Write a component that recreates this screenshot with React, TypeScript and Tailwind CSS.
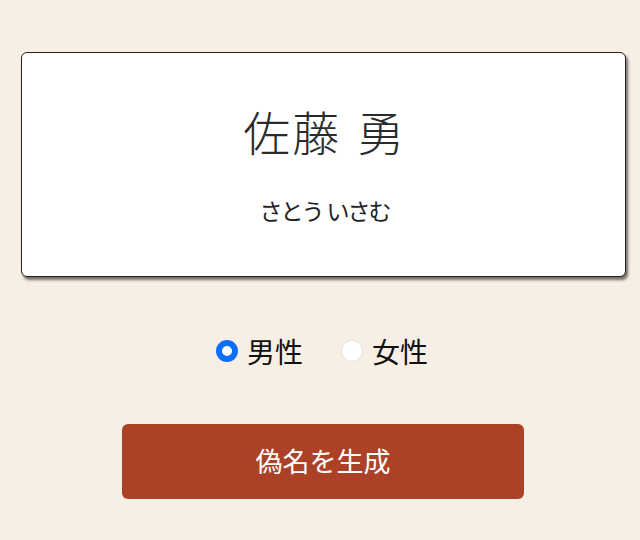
import { useState } from 'react'

const genders = [
  { id: 'male', label: '男性' },
  { id: 'female', label: '女性' },
]

export default function App() {
  const [gender, setGender] = useState('male')

  return (
    <div
      className="min-h-screen w-full bg-[#f8efe4] pt-[52px] text-[#212529]"
      style={{ fontFamily: '"Noto Sans CJK JP", "Noto Sans", sans-serif' }}
    >
      {/* 名前カード */}
      <div className="ml-[21px] w-[605px] h-[225px] bg-white border border-[#222] rounded-[6px] shadow-[2px_3px_3px_rgba(0,0,0,0.55)] flex flex-col items-center">
        <h1 className="mt-[48px] text-[47px] leading-[60px] font-light text-[#2b2b2b] tracking-[2px] [word-spacing:3px] pl-[2px]">佐藤 勇</h1>
        <p className="mt-[33px] text-[23px] leading-[32px] text-[#222] tracking-[-2px] [word-spacing:1px] pl-[2px]">さとう いさむ</p>
      </div>

      {/* 性別 */}
      <div className="mt-[56px] flex justify-center items-center gap-[38px] pl-[4px]">
        {genders.map((g) => {
          const checked = gender === g.id
          return (
            <label
              key={g.id}
              onClick={() => setGender(g.id)}
              className="flex items-center gap-[9px] cursor-pointer"
            >
              <span
                className={`w-[22px] h-[22px] rounded-full ${
                  checked
                    ? 'bg-white border-[6px] border-[#0d6efd]'
                    : 'bg-white border border-[#dee2e6]'
                }`}
              />
              <span className="text-[28px] leading-[36px] text-[#111]">{g.label}</span>
            </label>
          )
        })}
      </div>

      {/* ボタン */}
      <div className="mt-[55px] flex justify-center pl-[6px]">
        <button className="w-[402px] h-[75px] rounded-[6px] bg-[#ad4128] text-white text-[27px]">
          偽名を生成
        </button>
      </div>
    </div>
  )
}
